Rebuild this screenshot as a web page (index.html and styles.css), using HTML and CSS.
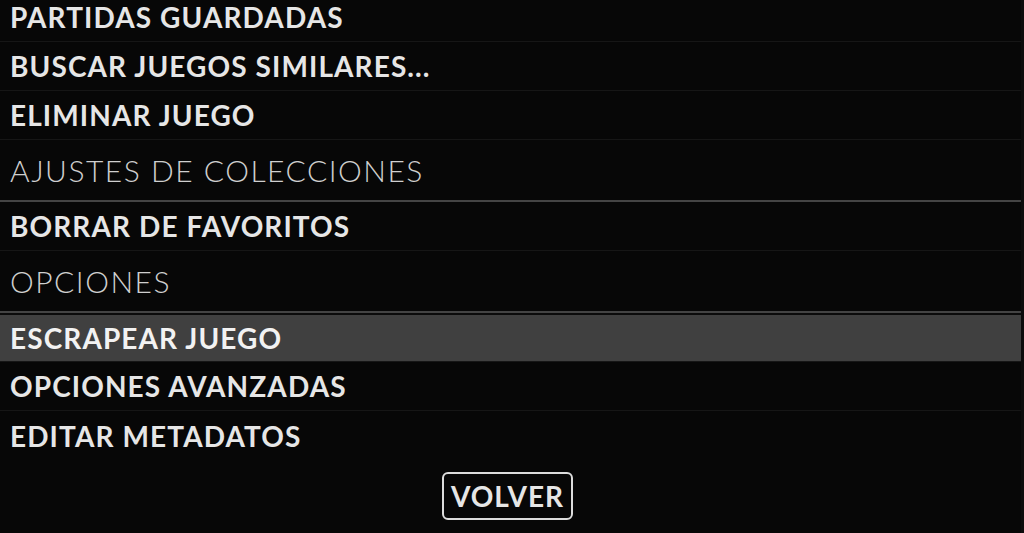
FILE: index.html
```html
<!DOCTYPE html>
<html lang="es">
<head>
  <meta charset="UTF-8" />
  <meta name="viewport" content="width=device-width, initial-scale=1" />
  <title>Opciones del juego</title>
  <link rel="stylesheet" href="styles.css">
</head>
<body>

  <!-- GAME OPTIONS MENU -->
  <div class="menu">
    <ul class="menu-list">
      <li class="item">PARTIDAS GUARDADAS</li>
      <li class="item">BUSCAR JUEGOS SIMILARES...</li>
      <li class="item">ELIMINAR JUEGO</li>
      <li class="group">AJUSTES DE COLECCIONES</li>
      <li class="item">BORRAR DE FAVORITOS</li>
      <li class="group">OPCIONES</li>
      <li class="item selected">ESCRAPEAR JUEGO</li>
      <li class="item">OPCIONES AVANZADAS</li>
      <li class="item last">EDITAR METADATOS</li>
    </ul>

    <div class="buttons">
      <button class="btn">VOLVER</button>
    </div>
  </div>

</body>
</html>
```

FILE: styles.css
```css
/* Reset and base */
* {
  box-sizing: border-box;
  margin: 0;
  padding: 0;
}

body {
  font-family: Lato, 'Open Sans', sans-serif;
  background-color: #070707;
  color: #e6e6e6;
  height: 100vh;
  overflow: hidden;
}

/* Menu (scrolled a little, first row is cut at the top) */
.menu {
  margin-top: -7px;
  border-right: 3px solid #0c0c0c;
  height: calc(100vh + 7px);
}

.menu-list {
  list-style: none;
}

.item {
  height: 49px;
  display: flex;
  align-items: center;
  padding-left: 10px;
  font-size: 28px;
  font-weight: 700;
  letter-spacing: 1.1px;
  border-bottom: 1px solid #161616;
  white-space: nowrap;
}

.item.last {
  border-bottom: none;
}

/* highlighted row */
.item.selected {
  background-color: #404040;
  border-top: 2px solid #0b0b0b;
  color: #f2f2f2;
}

/* Section headers, thinner and grey */
.group {
  height: 62px;
  display: flex;
  align-items: center;
  padding-left: 10px;
  font-size: 30px;
  font-weight: 300;
  letter-spacing: 1.5px;
  color: #cfcfcf;
  border-bottom: 2px solid #444;
  white-space: nowrap;
}

/* Bottom button row */
.buttons {
  display: flex;
  justify-content: center;
  padding-top: 12px;
  padding-right: 6px;
}

.btn {
  font-family: inherit;
  font-size: 28px;
  font-weight: 700;
  letter-spacing: 1px;
  color: #e6e6e6;
  background: transparent;
  border: 2px solid #dcdcdc;
  border-radius: 6px;
  width: 131px;
  height: 48px;
}
```
